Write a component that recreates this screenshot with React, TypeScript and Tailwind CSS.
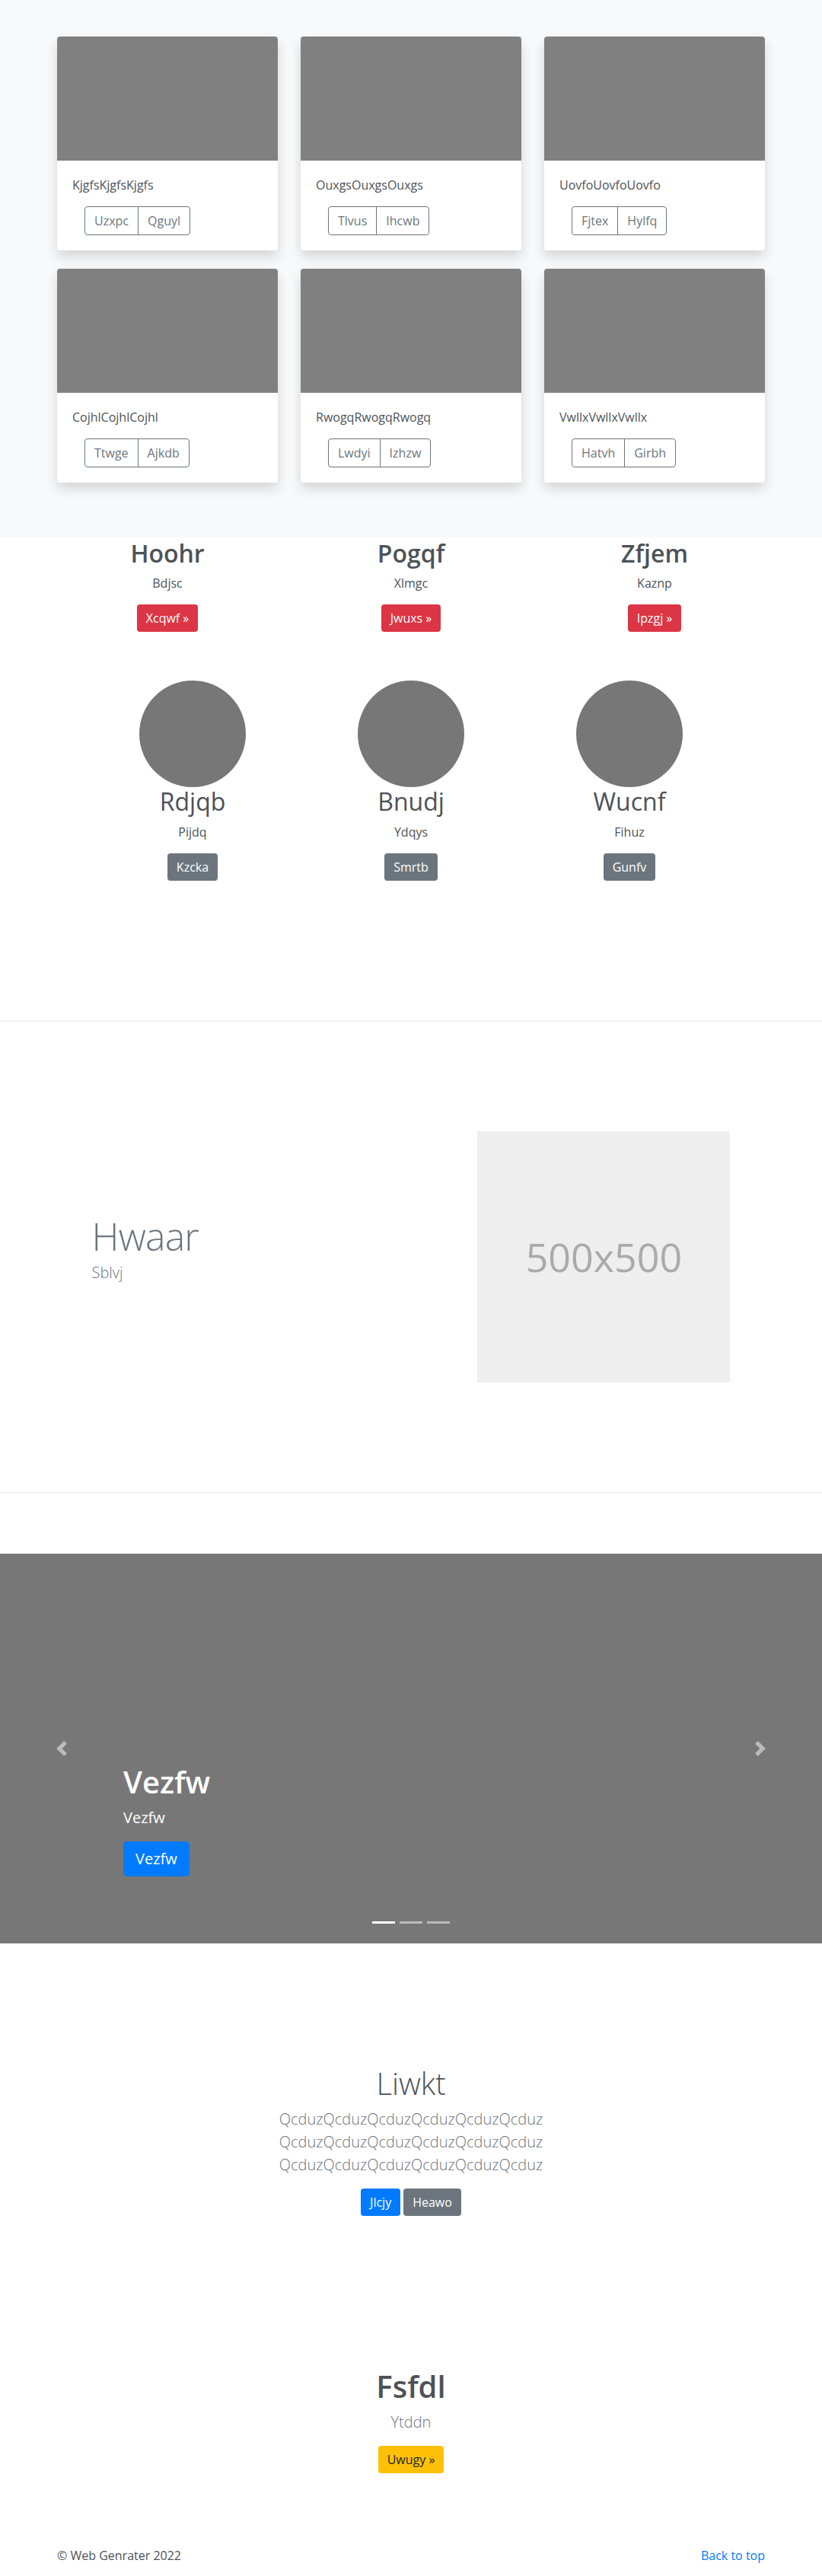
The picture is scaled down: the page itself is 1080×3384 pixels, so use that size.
import React from 'react'

const albumItems = [
  { text: 'KjgfsKjgfsKjgfs', a: 'Uzxpc', b: 'Qguyl' },
  { text: 'OuxgsOuxgsOuxgs', a: 'Tlvus', b: 'Ihcwb' },
  { text: 'UovfoUovfoUovfo', a: 'Fjtex', b: 'Hylfq' },
  { text: 'CojhlCojhlCojhl', a: 'Ttwge', b: 'Ajkdb' },
  { text: 'RwogqRwogqRwogq', a: 'Lwdyi', b: 'Izhzw' },
  { text: 'VwllxVwllxVwllx', a: 'Hatvh', b: 'Girbh' },
]

const marketing = [
  { title: 'Hoohr', text: 'Bdjsc', btn: 'Xcqwf »' },
  { title: 'Pogqf', text: 'Xlmgc', btn: 'Jwuxs »' },
  { title: 'Zfjem', text: 'Kaznp', btn: 'Ipzgj »' },
]

const team = [
  { title: 'Rdjqb', text: 'Pijdq', btn: 'Kzcka' },
  { title: 'Bnudj', text: 'Ydqys', btn: 'Smrtb' },
  { title: 'Wucnf', text: 'Fihuz', btn: 'Gunfv' },
]

function AlbumCard({ item }: { item: (typeof albumItems)[number] }) {
  return (
    <div className="overflow-hidden rounded bg-white shadow-[0_8px_16px_rgba(0,0,0,0.15)]">
      <div className="h-[163px] bg-[#808080]" />
      <div className="p-5">
        <p className="mb-4 text-base leading-6 text-[#4d5257]">{item.text}</p>
        <div className="ml-4 flex">
          <button className="rounded-l border border-[#6c757d] px-3 py-1.5 text-base leading-6 text-[#6c757d]">
            {item.a}
          </button>
          <button className="-ml-px rounded-r border border-[#6c757d] px-3 py-1.5 text-base leading-6 text-[#6c757d]">
            {item.b}
          </button>
        </div>
      </div>
    </div>
  )
}

function ChevronIcon({ dir }: { dir: 'prev' | 'next' }) {
  return (
    <svg width="20" height="20" viewBox="0 0 8 8" fill="#fff">
      {dir === 'prev' ? (
        <path d="M5.25 0l-4 4 4 4 1.5-1.5L4.25 4l2.5-2.5L5.25 0z" />
      ) : (
        <path d="M2.75 0l-1.5 1.5L3.75 4l-2.5 2.5L2.75 8l4-4-4-4z" />
      )}
    </svg>
  )
}

export default function App() {
  return (
    <div className="min-h-screen bg-white font-['Open_Sans',sans-serif] text-[#4d5257]">
      {/* album */}
      <section className="bg-[#f8f9fa] pt-12 pb-[72px]">
        <div className="mx-auto grid w-[930px] grid-cols-3 gap-x-[30px] gap-y-6">
          {albumItems.map((item) => (
            <AlbumCard key={item.text} item={item} />
          ))}
        </div>
      </section>

      {/* marketing */}
      <section className="mx-auto grid w-[930px] grid-cols-3 gap-x-[30px] pt-[2px] text-center">
        {marketing.map((m) => (
          <div key={m.title}>
            <h2 className="mb-2 text-[32px] font-semibold leading-[1.2]">{m.title}</h2>
            <p className="mb-4 text-base leading-6">{m.text}</p>
            <a className="inline-block rounded bg-[#dc3545] px-3 py-1.5 text-base leading-6 text-white">
              {m.btn}
            </a>
          </div>
        ))}
      </section>

      <section className="mx-auto mt-[64px] grid w-[861px] grid-cols-3 text-center">
        {team.map((t) => (
          <div key={t.title} className="flex flex-col items-center">
            <div className="h-[140px] w-[140px] rounded-full bg-[#777]" />
            <h2 className="mb-2 text-[32px] leading-[1.2]">{t.title}</h2>
            <p className="mb-4 text-base leading-6">{t.text}</p>
            <a className="inline-block rounded bg-[#6c757d] px-3 py-1.5 text-base leading-6 text-white">
              {t.btn}
            </a>
          </div>
        ))}
      </section>

      <hr className="mt-[184px] border-t border-[#e6e6e6]" />

      {/* featurette */}
      <section className="mx-auto flex w-[869px] items-center py-[144px]">
        <div className="w-7/12 px-[15px]">
          <h2 className="mb-2 text-[50px] font-light leading-none tracking-[-0.05rem] text-[#6c757d]">
            Hwaar
          </h2>
          <p className="mb-4 text-[20px] font-light leading-[1.5] text-[#6c757d]">Sblvj</p>
        </div>
        <div className="w-5/12 px-[15px]">
          <div className="flex h-[330px] w-full items-center justify-center bg-[#eee] text-[52px] text-[#aaa]">
            500x500
          </div>
        </div>
      </section>

      <hr className="border-t border-[#e6e6e6]" />

      {/* carousel */}
      <section className="relative mt-20 flex h-[512px] flex-col justify-end bg-[#777] pb-[88px] pl-[15%]">
        <h1 className="mb-2 text-[40px] font-semibold leading-[1.2] text-white">Vezfw</h1>
        <p className="mb-4 text-[20px] leading-[1.5] text-white">Vezfw</p>
        <div>
          <a className="inline-block rounded-[5px] bg-[#007bff] px-4 py-2 text-[20px] leading-[1.5] text-white">
            Vezfw
          </a>
        </div>
        <div className="absolute inset-y-0 left-0 flex w-[15%] items-center justify-center opacity-50">
          <ChevronIcon dir="prev" />
        </div>
        <div className="absolute inset-y-0 right-0 flex w-[15%] items-center justify-center opacity-50">
          <ChevronIcon dir="next" />
        </div>
        <div className="absolute bottom-[26px] left-1/2 flex -translate-x-1/2 gap-[6px]">
          <span className="h-[3px] w-[30px] bg-white" />
          <span className="h-[3px] w-[30px] bg-white opacity-50" />
          <span className="h-[3px] w-[30px] bg-white opacity-50" />
        </div>
      </section>

      {/* jumbotron */}
      <section className="pt-[160px] text-center">
        <h1 className="mb-2 text-[40px] font-light leading-[1.2]">Liwkt</h1>
        <p className="mx-auto mb-4 w-[450px] text-[20px] font-light leading-[1.5] text-[#6c757d]">
          QcduzQcduzQcduzQcduzQcduzQcduz QcduzQcduzQcduzQcduzQcduzQcduz QcduzQcduzQcduzQcduzQcduzQcduz
        </p>
        <div className="my-2 flex justify-center gap-1">
          <a className="rounded bg-[#007bff] px-3 py-1.5 text-base leading-6 text-white">Jlcjy</a>
          <a className="rounded bg-[#6c757d] px-3 py-1.5 text-base leading-6 text-white">Heawo</a>
        </div>
      </section>

      <section className="pt-[192px] text-center">
        <h1 className="mb-2 text-[40px] font-semibold leading-[1.2]">Fsfdl</h1>
        <p className="mb-4 text-[20px] font-light leading-[1.5] text-[#6c757d]">Ytddn</p>
        <a className="inline-block rounded bg-[#ffc107] px-3 py-1.5 text-base leading-6 text-[#212529]">
          Uwugy »
        </a>
      </section>

      <footer className="mx-auto mt-[96px] flex w-[930px] justify-between pb-12 text-base leading-6">
        <p>© Web Genrater 2022</p>
        <a className="text-[#007bff]">Back to top</a>
      </footer>
    </div>
  )
}
